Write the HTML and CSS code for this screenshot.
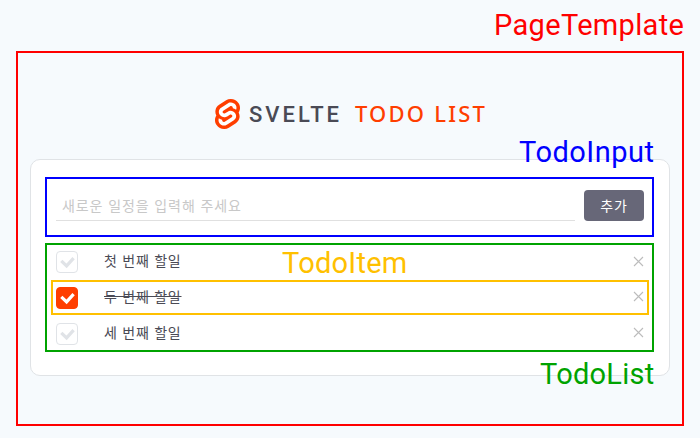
FILE: index.html
```
<!DOCTYPE html>
<html lang="ko">
<head>
<meta charset="utf-8">
<title>Svelte Todo List</title>
<link rel="stylesheet" href="styles.css">
</head>
<body>
<span class="label label-page">PageTemplate</span>
<main class="page">
  <h1 class="title">
    <svg class="logo" viewBox="0 0 98.1 118" preserveAspectRatio="none"><path fill="#ff3e00" d="M91.8 15.6C80.9-.1 59.2-4.7 43.6 5.2L16.1 22.8C8.6 27.5 3.4 35.2 1.9 43.9c-1.3 7.3-.2 14.8 3.3 21.3-2.4 3.6-4 7.6-4.7 11.8-1.6 8.9.5 18.1 5.7 25.4 11 15.7 32.6 20.3 48.2 10.4l27.5-17.5c7.5-4.7 12.7-12.4 14.2-21.1 1.3-7.3.2-14.8-3.3-21.3 2.4-3.6 4-7.6 4.7-11.8 1.7-9-.4-18.2-5.7-25.5"/><path fill="#fff" d="M40.9 103.9c-8.9 2.3-18.2-1.2-23.4-8.7-3.2-4.4-4.4-9.9-3.5-15.3.2-.9.4-1.7.6-2.6l.5-1.6 1.4 1c3.3 2.4 6.9 4.2 10.8 5.4l1 .3-.1 1c-.1 1.4.3 2.9 1.1 4.1 1.6 2.3 4.4 3.4 7.1 2.7.6-.2 1.2-.4 1.7-.7L65.5 72c1.4-.9 2.3-2.2 2.6-3.8.3-1.6-.1-3.3-1-4.6-1.6-2.3-4.4-3.3-7.1-2.6-.6.2-1.2.4-1.7.7l-10.5 6.7c-1.7 1.1-3.6 1.9-5.6 2.4-8.9 2.3-18.2-1.2-23.4-8.7-3.1-4.4-4.4-9.9-3.4-15.3.9-5.2 4.1-9.9 8.6-12.7l27.5-17.5c1.7-1.1 3.6-1.9 5.6-2.5 8.9-2.3 18.2 1.2 23.4 8.7 3.2 4.4 4.4 9.9 3.5 15.3-.2.9-.4 1.7-.7 2.6l-.5 1.6-1.4-1c-3.3-2.4-6.9-4.2-10.8-5.4l-1-.3.1-1c.1-1.4-.3-2.9-1.1-4.1-1.6-2.3-4.4-3.3-7.1-2.6-.6.2-1.2.4-1.7.7L32.4 46.1c-1.4.9-2.3 2.2-2.6 3.8s.1 3.3 1 4.6c1.6 2.3 4.4 3.3 7.1 2.6.6-.2 1.2-.4 1.7-.7l10.5-6.7c1.7-1.1 3.6-1.9 5.6-2.5 8.9-2.3 18.2 1.2 23.4 8.7 3.2 4.4 4.4 9.9 3.5 15.3-.9 5.2-4.1 9.9-8.6 12.7l-27.5 17.5c-1.7 1.1-3.6 1.9-5.6 2.5"/></svg>
    <span class="word">SVELTE</span>
    <span class="accent">TODO LIST</span>
  </h1>
  <section class="card">
    <form class="todo-input">
      <input class="field" type="text" placeholder="새로운 일정을 입력해 주세요">
      <button class="add" type="button">추가</button>
    </form>
    <ul class="todo-list">
      <li class="item">
        <span class="check"><svg viewBox="0 0 22 22"><path d="M5.3 9.8l5.3 5.1 7-7.7"/></svg></span>
        <span class="text">첫 번째 할일</span>
        <svg class="remove" viewBox="0 0 11 11"><path d="M1 1l9 9M10 1l-9 9"/></svg>
      </li>
      <li class="item done">
        <span class="check"><svg viewBox="0 0 22 22"><path d="M5.3 9.8l5.3 5.1 7-7.7"/></svg></span>
        <span class="text">두 번째 할일</span>
        <svg class="remove" viewBox="0 0 11 11"><path d="M1 1l9 9M10 1l-9 9"/></svg>
      </li>
      <li class="item">
        <span class="check"><svg viewBox="0 0 22 22"><path d="M5.3 9.8l5.3 5.1 7-7.7"/></svg></span>
        <span class="text">세 번째 할일</span>
        <svg class="remove" viewBox="0 0 11 11"><path d="M1 1l9 9M10 1l-9 9"/></svg>
      </li>
    </ul>
  </section>
</main>
<span class="label label-input">TodoInput</span>
<span class="label label-item">TodoItem</span>
<span class="label label-list">TodoList</span>
</body>
</html>
```
FILE: styles.css
```
* { box-sizing: border-box; }
body {
  margin: 0;
  height: 438px;
  padding: 51px 16px 12px;
  overflow: hidden;
  background: #f6fafd;
  color: #4a4a55;
  font-family: "Noto Sans CJK KR", sans-serif;
}
.page {
  height: 375px;
  padding: 46px 12px 0;
  border: 2px solid #f00;
}
.title {
  display: flex;
  align-items: center;
  height: 30px;
  margin: 0 0 30px;
  padding-left: 185px;
  font: 500 22px/30px "Noto Sans", sans-serif;
}
.logo { width: 25px; height: 30px; margin-right: 9px; }
.word {
  width: 106px;
  padding-top: 2px;
  font-family: Roboto, sans-serif;
  font-weight: 500;
  letter-spacing: 3px;
  color: #4a4a55;
  white-space: nowrap;
}
.accent { margin-bottom: 2px; letter-spacing: 2.2px; color: #ff3e00; white-space: nowrap; }
.card {
  height: 217px;
  padding: 17px 15px 0 14px;
  border: 1px solid #e0e3e6;
  border-radius: 10px;
  background: #fff;
}
.todo-input {
  display: flex;
  gap: 9px;
  height: 60px;
  margin: 0 0 6px;
  padding: 11px 8px 0 9px;
  border: 2px solid #00f;
}
.field {
  flex: 1;
  min-width: 0;
  height: 31px;
  padding: 0 6px;
  border: 0;
  border-bottom: 1px solid #e0e0e0;
  font: 14px "Noto Sans CJK KR", sans-serif;
  letter-spacing: 0.9px;
  background: transparent;
}
.field::placeholder { color: #c8c8c8; }
.add {
  width: 60px;
  height: 31px;
  padding: 0 0 1px;
  border: 0;
  border-radius: 4px;
  background: #676778;
  color: #fff;
  font: 14px/30px "Noto Sans CJK KR", sans-serif;
  letter-spacing: 0.8px;
}
.todo-list {
  height: 109px;
  margin: 0;
  padding: 0 3px 0 4px;
  border: 2px solid #00a300;
  list-style: none;
}
.item {
  display: flex;
  align-items: center;
  height: 35px;
  padding: 0 5px 1px;
}
.item.done {
  padding: 0 3px;
  border: 2px solid #ffc000;
}
.item:last-child { padding: 2px 5px 0; }
.check {
  width: 22px;
  height: 22px;
  margin-right: 26px;
  border: 1px solid #e0e3e7;
  border-radius: 4px;
}
.check svg { display: block; width: 22px; height: 22px; margin: -1px; }
.check path { fill: none; stroke: #e0e3e7; stroke-width: 3.2; }
.done .check { border-color: #ff3e00; background: #ff3e00; }
.done .check path { stroke: #fff; }
.text { margin-bottom: 4px; font-size: 14px; line-height: 20px; letter-spacing: 0.75px; }
.done .text { text-decoration: line-through; }
.remove { width: 11px; height: 11px; margin: 0 0 2px auto; }
.remove path { fill: none; stroke: #bcbcbc; stroke-width: 1.1; }
.label {
  position: absolute;
  font-family: Roboto, sans-serif;
  font-size: 29px;
  line-height: 34px;
  white-space: nowrap;
}
.label-page { left: 494px; top: 8px; letter-spacing: 0.33px; color: #f00; }
.label-input { left: 519px; top: 135px; letter-spacing: 0.5px; color: #00f; }
.label-item { left: 282px; top: 246px; letter-spacing: 0.25px; color: #ffc000; }
.label-list { left: 540px; top: 357px; letter-spacing: 0.25px; color: #00a300; }
```
